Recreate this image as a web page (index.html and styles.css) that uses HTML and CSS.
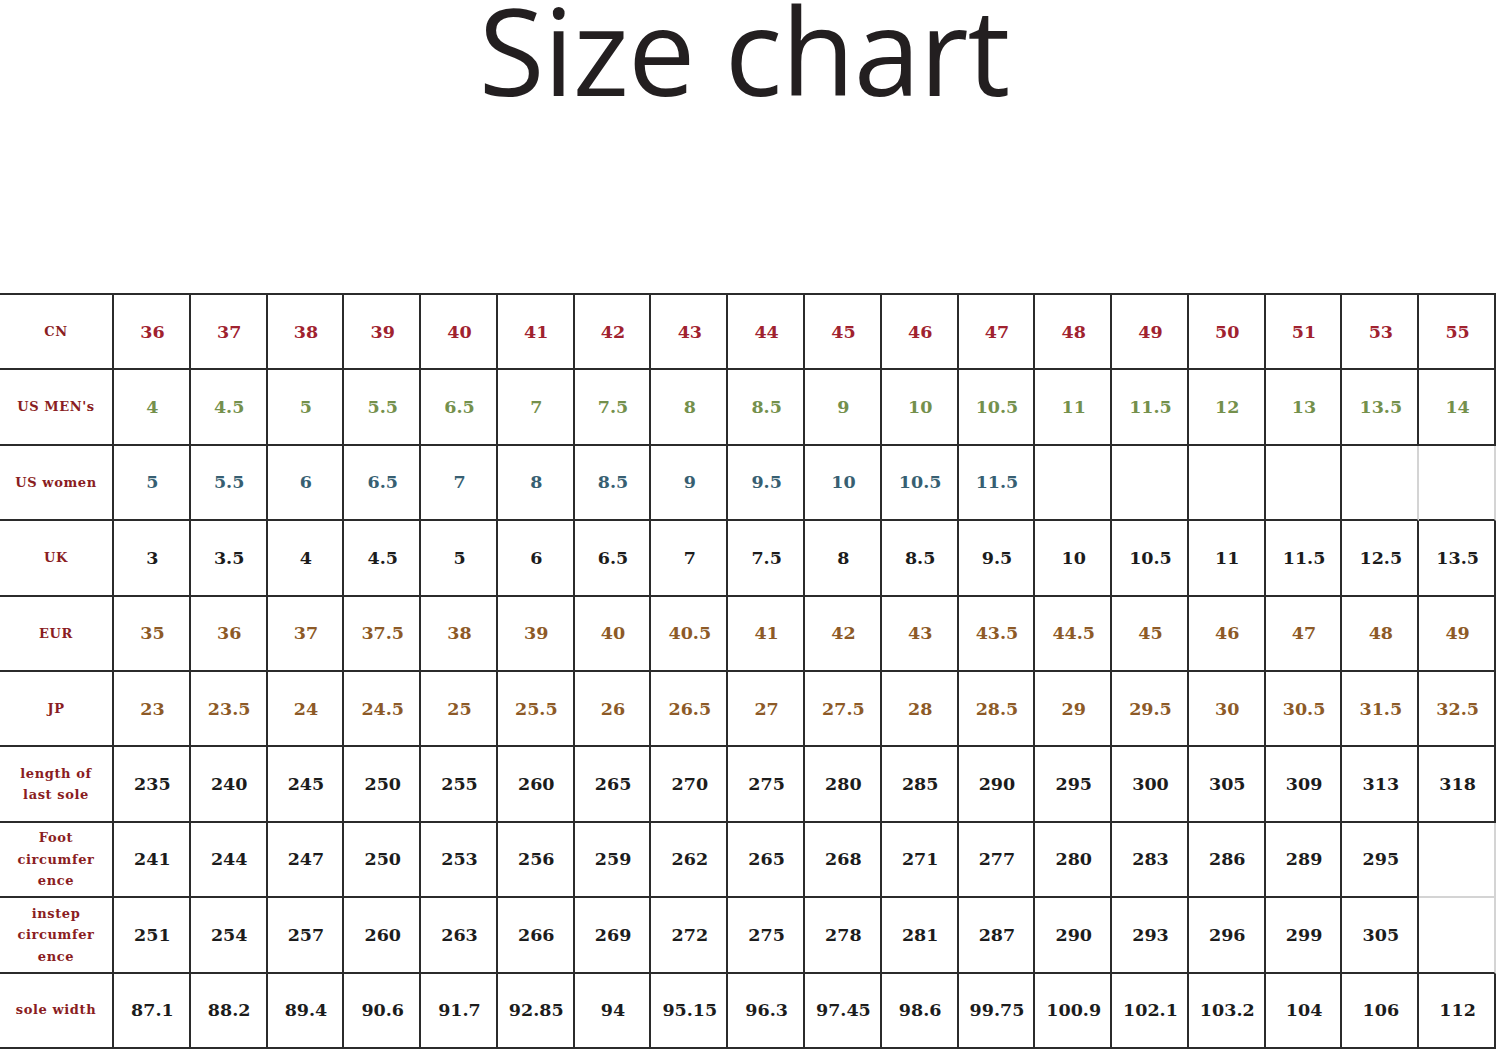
FILE: index.html
```html
<!DOCTYPE html>
<html lang="en">
<head>
<meta charset="utf-8">
<title>Size chart</title>
<link rel="stylesheet" href="styles.css">
</head>
<body>
<header class="head"><h1 class="title">Size chart</h1></header>
<div class="chart">
  <div class="c lab">CN</div>
  <div class="c red">36</div><div class="c red">37</div><div class="c red">38</div><div class="c red">39</div><div class="c red">40</div><div class="c red">41</div><div class="c red">42</div><div class="c red">43</div><div class="c red">44</div><div class="c red">45</div><div class="c red">46</div><div class="c red">47</div><div class="c red">48</div><div class="c red">49</div><div class="c red">50</div><div class="c red">51</div><div class="c red">53</div><div class="c red">55</div>

  <div class="c lab">US MEN's</div>
  <div class="c grn">4</div><div class="c grn">4.5</div><div class="c grn">5</div><div class="c grn">5.5</div><div class="c grn">6.5</div><div class="c grn">7</div><div class="c grn">7.5</div><div class="c grn">8</div><div class="c grn">8.5</div><div class="c grn">9</div><div class="c grn">10</div><div class="c grn">10.5</div><div class="c grn">11</div><div class="c grn">11.5</div><div class="c grn">12</div><div class="c grn">13</div><div class="c grn">13.5</div><div class="c grn">14</div>

  <div class="c lab">US women</div>
  <div class="c teal">5</div><div class="c teal">5.5</div><div class="c teal">6</div><div class="c teal">6.5</div><div class="c teal">7</div><div class="c teal">8</div><div class="c teal">8.5</div><div class="c teal">9</div><div class="c teal">9.5</div><div class="c teal">10</div><div class="c teal">10.5</div><div class="c teal">11.5</div><div class="c"></div><div class="c"></div><div class="c"></div><div class="c"></div><div class="c lr"></div><div class="c lr"></div>

  <div class="c lab">UK</div>
  <div class="c">3</div><div class="c">3.5</div><div class="c">4</div><div class="c">4.5</div><div class="c">5</div><div class="c">6</div><div class="c">6.5</div><div class="c">7</div><div class="c">7.5</div><div class="c">8</div><div class="c">8.5</div><div class="c">9.5</div><div class="c">10</div><div class="c">10.5</div><div class="c">11</div><div class="c">11.5</div><div class="c">12.5</div><div class="c">13.5</div>

  <div class="c lab">EUR</div>
  <div class="c brn">35</div><div class="c brn">36</div><div class="c brn">37</div><div class="c brn">37.5</div><div class="c brn">38</div><div class="c brn">39</div><div class="c brn">40</div><div class="c brn">40.5</div><div class="c brn">41</div><div class="c brn">42</div><div class="c brn">43</div><div class="c brn">43.5</div><div class="c brn">44.5</div><div class="c brn">45</div><div class="c brn">46</div><div class="c brn">47</div><div class="c brn">48</div><div class="c brn">49</div>

  <div class="c lab">JP</div>
  <div class="c brn">23</div><div class="c brn">23.5</div><div class="c brn">24</div><div class="c brn">24.5</div><div class="c brn">25</div><div class="c brn">25.5</div><div class="c brn">26</div><div class="c brn">26.5</div><div class="c brn">27</div><div class="c brn">27.5</div><div class="c brn">28</div><div class="c brn">28.5</div><div class="c brn">29</div><div class="c brn">29.5</div><div class="c brn">30</div><div class="c brn">30.5</div><div class="c brn">31.5</div><div class="c brn">32.5</div>

  <div class="c lab">length of<br>last sole</div>
  <div class="c">235</div><div class="c">240</div><div class="c">245</div><div class="c">250</div><div class="c">255</div><div class="c">260</div><div class="c">265</div><div class="c">270</div><div class="c">275</div><div class="c">280</div><div class="c">285</div><div class="c">290</div><div class="c">295</div><div class="c">300</div><div class="c">305</div><div class="c">309</div><div class="c">313</div><div class="c">318</div>

  <div class="c lab">Foot<br>circumfer<br>ence</div>
  <div class="c">241</div><div class="c">244</div><div class="c">247</div><div class="c">250</div><div class="c">253</div><div class="c">256</div><div class="c">259</div><div class="c">262</div><div class="c">265</div><div class="c">268</div><div class="c">271</div><div class="c">277</div><div class="c">280</div><div class="c">283</div><div class="c">286</div><div class="c">289</div><div class="c">295</div><div class="c lr lb"></div>

  <div class="c lab">instep<br>circumfer<br>ence</div>
  <div class="c">251</div><div class="c">254</div><div class="c">257</div><div class="c">260</div><div class="c">263</div><div class="c">266</div><div class="c">269</div><div class="c">272</div><div class="c">275</div><div class="c">278</div><div class="c">281</div><div class="c">287</div><div class="c">290</div><div class="c">293</div><div class="c">296</div><div class="c">299</div><div class="c">305</div><div class="c lr"></div>

  <div class="c lab">sole width</div>
  <div class="c">87.1</div><div class="c">88.2</div><div class="c">89.4</div><div class="c">90.6</div><div class="c">91.7</div><div class="c">92.85</div><div class="c">94</div><div class="c">95.15</div><div class="c">96.3</div><div class="c">97.45</div><div class="c">98.6</div><div class="c">99.75</div><div class="c">100.9</div><div class="c">102.1</div><div class="c">103.2</div><div class="c">104</div><div class="c">106</div><div class="c">112</div>
</div>
</body>
</html>
```
FILE: styles.css
```css
html, body {
  margin: 0;
  padding: 0;
  background: #ffffff;
}
body {
  width: 1500px;
  height: 1052px;
  overflow: hidden;
}
.head {
  height: 293px;
  display: flex;
  justify-content: center;
}
.title {
  margin: 0 12px 0 0;
  font-family: "Open Sans", "Noto Sans", sans-serif;
  font-weight: 400;
  font-size: 120px;
  line-height: 100px;
  color: #231f20;
  letter-spacing: -1px;
}
.chart {
  width: 1496px;
  display: grid;
  grid-template-columns: 114px repeat(18, 1fr);
  grid-template-rows: repeat(10, 75.4px);
  border-top: 2px solid #2b2b2b;
  box-sizing: content-box;
}
.c {
  box-sizing: border-box;
  border-right: 2px solid #2b2b2b;
  border-bottom: 2px solid #2b2b2b;
  display: flex;
  align-items: center;
  justify-content: center;
  text-align: center;
  font-family: "DejaVu Serif", "Liberation Serif", serif;
  font-weight: 700;
  font-size: 17.5px;
  color: #1c1c1c;
  padding-left: 2px;
}
.lab {
  font-size: 13px;
  letter-spacing: 0.6px;
  line-height: 21.5px;
  color: #8a1d22;
  padding-left: 0;
}
.red { color: #a0222f; }
.grn { color: #74904c; }
.teal { color: #375f72; }
.brn { color: #8d5a27; }
.lr { border-right-color: #d4d4d4; }
.lb { border-bottom-color: #d4d4d4; }
```
